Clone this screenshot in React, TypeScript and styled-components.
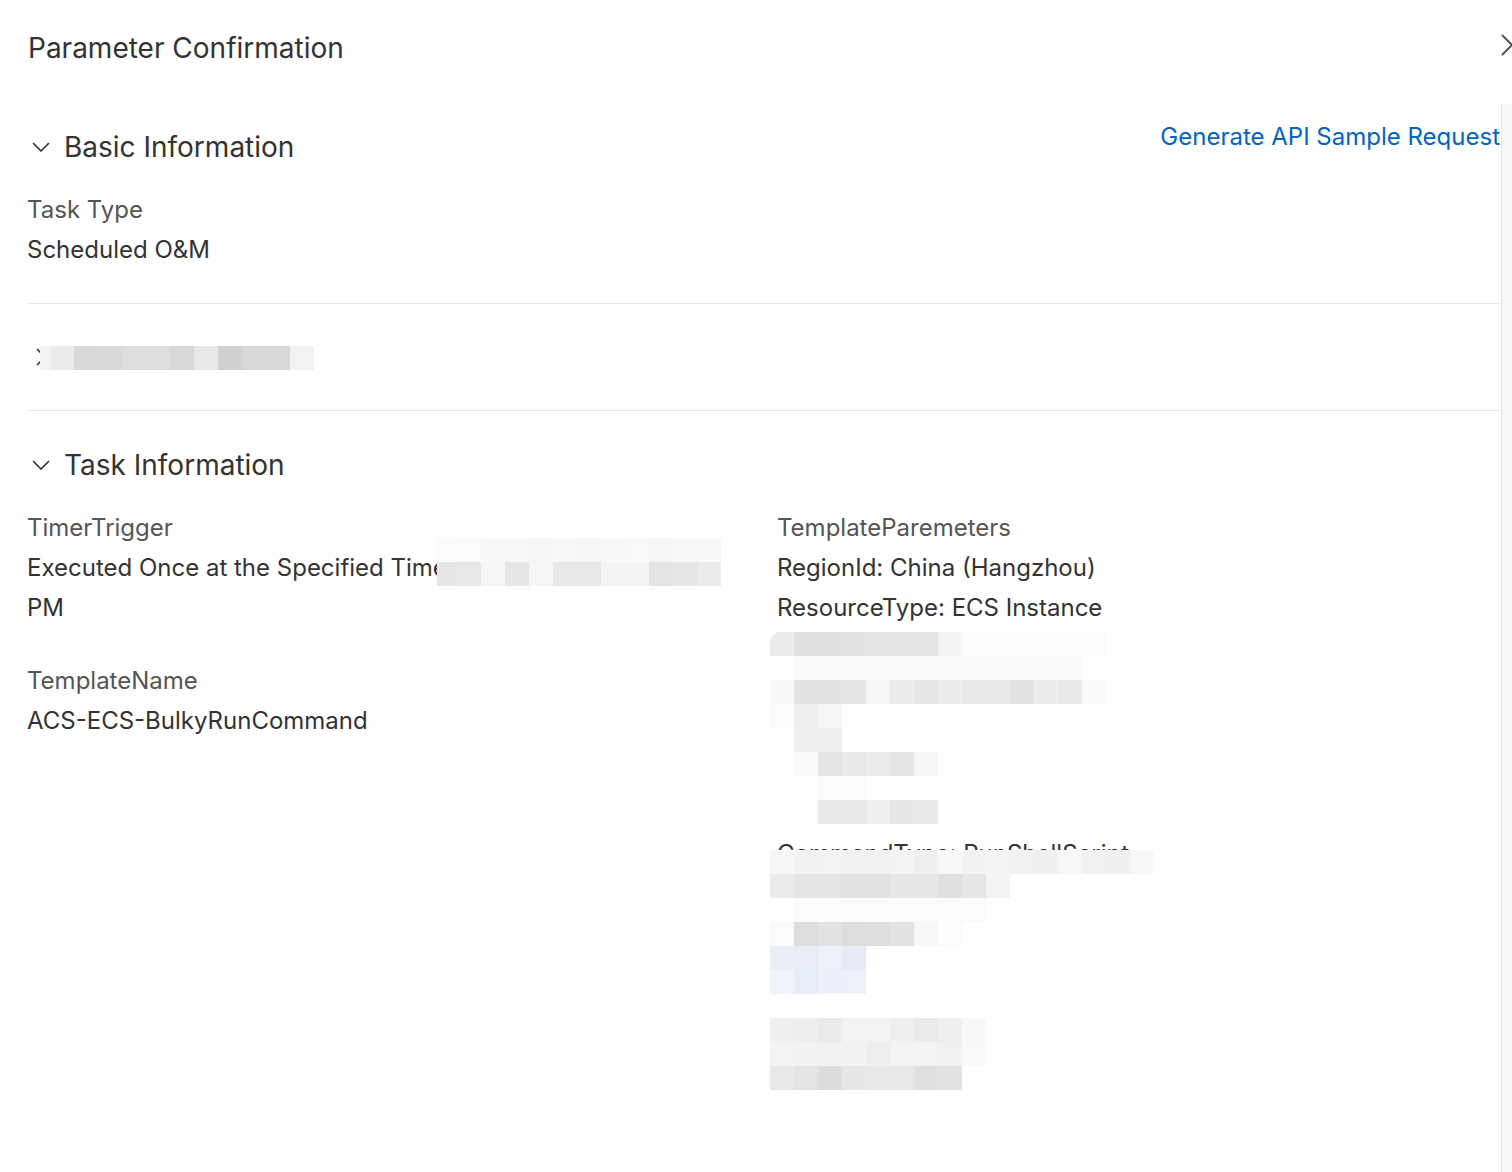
import React from 'react';
import styled, { createGlobalStyle } from 'styled-components';

const GlobalStyle = createGlobalStyle`
  html, body {
    margin: 0;
    padding: 0;
    background: #fff;
    overflow: hidden;
  }
  body {
    font-family: Inter, 'Noto Sans', 'Liberation Sans', sans-serif;
    color: #333;
  }
`;

const Drawer = styled.div`
  width: 1512px;
  height: 1172px;
  display: flex;
  flex-direction: column;
  overflow: hidden;
  background: #fff;
`;

const DrawerHeader = styled.div`
  height: 104px;
  box-sizing: border-box;
  display: flex;
  align-items: flex-start;
  justify-content: space-between;
  padding: 28px 0 0 28px;
  flex-shrink: 0;
`;

const Title = styled.div`
  font-size: 28px;
  line-height: 40px;
  font-weight: 400;
  color: #333;
`;

const CloseButton = styled.button`
  width: 22px;
  height: 22px;
  margin-top: 6px;
  margin-right: -11px;
  padding: 0;
  border: none;
  background: transparent;
  display: flex;
  cursor: pointer;
`;

const DrawerBody = styled.div`
  flex: 1;
  display: flex;
  min-height: 0;
`;

const Content = styled.div`
  flex: 1;
  padding-left: 27px;
`;

const ScrollTrack = styled.div`
  width: 10px;
  background: #f8f8f8;
  border-left: 1px solid #e6e6e6;
`;

const Section = styled.div<{ $pt: number; $pb: number; $last?: boolean }>`
  padding: ${({ $pt }) => $pt}px 0 ${({ $pb }) => $pb}px;
  border-bottom: ${({ $last }) => ($last ? 'none' : '1px solid #e8e8e8')};
`;

const SectionHead = styled.div`
  display: flex;
  align-items: flex-start;
`;

const ChevronBox = styled.span`
  width: 28px;
  height: 40px;
  margin-right: 9px;
  display: flex;
  align-items: center;
  justify-content: center;
  flex-shrink: 0;
`;

const SectionTitle = styled.div`
  font-size: 28px;
  line-height: 40px;
  color: #333;
`;

const ApiLink = styled.a`
  margin-left: auto;
  margin-top: -10px;
  margin-right: 1px;
  font-size: 24px;
  line-height: 40px;
  color: #0064c8;
  text-decoration: none;
  cursor: pointer;
`;

const FieldList = styled.div`
  margin-top: 23px;
  display: flex;
  flex-direction: column;
  gap: 33px;
`;

const Field = styled.div`
  display: flex;
  flex-direction: column;
`;

const FieldLabel = styled.div`
  font-size: 24px;
  line-height: 40px;
  color: #555;
`;

const FieldValue = styled.div`
  position: relative;
  font-size: 24px;
  line-height: 40px;
  color: #333;
  white-space: nowrap;
`;

const TaskGrid = styled.div`
  margin-top: 23px;
  display: grid;
  grid-template-columns: 750px 1fr;
`;

const Column = styled.div`
  display: flex;
  flex-direction: column;
  gap: 33px;
`;

const Mosaic = styled.div<{ $radius?: number }>`
  display: flex;
  flex-direction: column;
  border-top-left-radius: ${({ $radius }) => $radius ?? 0}px;
  overflow: hidden;
`;

const MosaicOverlay = styled(Mosaic)`
  position: absolute;
  left: 410px;
  top: -10px;
`;

const InlineMosaic = styled(Mosaic)`
  margin-left: -24px;
  margin-top: 9px;
`;

const ParamMosaic = styled(Mosaic)`
  margin-top: 4px;
  margin-left: -7px;
`;

const MosaicRow = styled.div<{ $offset: number; $h: number }>`
  display: flex;
  height: ${({ $h }) => $h}px;
  padding-left: ${({ $offset }) => $offset * 24}px;
`;

const Cell = styled.span<{ $c: string; $w?: number }>`
  width: ${({ $w }) => $w ?? 24}px;
  height: 100%;
  flex-shrink: 0;
  background: #${({ $c }) => $c};
`;

const PeekRow = styled.div`
  height: 26px;
  overflow: hidden;
  padding-left: 7px;
`;

const PeekText = styled.div`
  margin-top: 10px;
  font-size: 24px;
  line-height: 40px;
  color: #333;
  white-space: nowrap;
`;

type Row = { offset?: number; h?: number; cells: (string | [string, number])[] };

const renderRows = (rows: Row[]) =>
  rows.map((row, i) => (
    <MosaicRow key={i} $offset={row.offset ?? 0} $h={row.h ?? 24}>
      {row.cells.map((c, j) =>
        Array.isArray(c) ? <Cell key={j} $c={c[0]} $w={c[1]} /> : <Cell key={j} $c={c} />
      )}
    </MosaicRow>
  ));

const fill = (c: string, n: number) => Array.from({ length: n }, () => c);

const targetRows: Row[] = [
  {
    cells: [
      ['f4f4f4', 10],
      'ececec', 'd9d9d9', 'dadada', 'dddddd', 'dddddd', 'd8d8d8',
      'e8e8e8', 'd0d0d0', 'd8d8d8', 'd8d8d8', 'f3f3f3',
    ],
  },
];

const timeRows: Row[] = [
  {
    cells: [
      ['fcfcfc', 20],
      'fbfbfb', 'f8f8f8', 'f8f8f8', 'f6f6f6', 'f8f8f8', 'f6f6f6',
      'f8f8f8', 'f9f9f9', 'f6f6f6', 'f8f8f8', 'f8f8f8',
    ],
  },
  {
    cells: [
      ['e6e6e6', 20],
      'e8e8e8', 'f6f6f6', 'e6e6e6', 'f6f6f6', 'e8e8e8', 'e8e8e8',
      'f4f4f4', 'f4f4f4', 'e4e4e4', 'e6e6e6', 'ececec',
    ],
  },
];

const paramRowsTop: Row[] = [
  {
    cells: [
      'ececec', 'e0e0e0', 'e0e0e0', 'e2e2e2', 'e4e4e4', 'e4e4e4', 'e4e4e4', 'f4f4f4',
      ...fill('fcfcfc', 6),
    ],
  },
  { offset: 1, cells: fill('fafafa', 12) },
  {
    cells: [
      'f8f8f8', 'e2e2e2', 'e2e2e2', 'e4e4e4', 'f6f6f6', 'ececec', 'e6e6e6',
      'ececec', 'e8e8e8', 'e8e8e8', 'e2e2e2', 'ececec', 'e8e8e8', 'fafafa',
    ],
  },
  { cells: ['fbfbfb', 'f0f0f0', 'f6f6f6'] },
  { offset: 1, cells: ['f0f0f0', 'f0f0f0'] },
  { offset: 1, cells: ['fafafa', 'e4e4e4', 'e8e8e8', 'ececec', 'e4e4e4', 'f6f6f6'] },
  { offset: 2, cells: ['fbfbfb', 'fbfbfb'] },
  { offset: 2, cells: ['e8e8e8', 'e8e8e8', 'efefef', 'e6e6e6', 'e8e8e8'] },
];

const paramRowsBottom: Row[] = [
  {
    cells: [
      'f6f6f6', 'f2f2f2', 'f3f3f3', 'f1f1f1', 'f1f1f1', 'f3f3f3', 'f0f0f0', 'f8f8f8',
      'f2f2f2', 'f4f4f4', 'f2f2f2', 'f0f0f0', 'f8f8f8', 'f1f1f1', 'f0f0f0', 'f8f8f8',
    ],
  },
  {
    cells: [
      'ececec', 'e4e4e4', 'e4e4e4', 'e2e2e2', 'e2e2e2',
      'e6e6e6', 'e6e6e6', 'e0e0e0', 'e6e6e6', 'f4f4f4',
    ],
  },
  { offset: 1, cells: fill('fbfbfb', 8) },
  { cells: ['fbfbfb', 'dddddd', 'e2e2e2', 'dddddd', 'dedede', 'e2e2e2', 'f8f8f8', 'fcfcfc'] },
  { cells: ['ebeef8', 'e8edf8', 'edf1fa', 'e6ebf7'] },
  { cells: ['f2f4fb', 'e8eef8', 'ecf0fa', 'ecf1fa'] },
  { cells: [] },
  {
    cells: [
      'f0f0f0', 'eeeeee', 'ebebeb', 'f3f3f3', 'f3f3f3',
      'f0f0f0', 'ebebeb', 'efefef', 'f8f8f8',
    ],
  },
  {
    cells: [
      'f3f3f3', 'f2f2f2', 'f2f2f2', 'f2f2f2', 'efefef',
      'f3f3f3', 'f3f3f3', 'f1f1f1', 'f9f9f9',
    ],
  },
  { cells: ['e8e8e8', 'e4e4e4', 'dcdcdc', 'e6e6e6', 'e8e8e8', 'e8e8e8', 'e0e0e0', 'e2e2e2'] },
];

const Chevron: React.FC<{ open?: boolean }> = ({ open }) =>
  open ? (
    <svg width='18' height='11' viewBox='0 0 18 11' fill='none'>
      <polyline points='1.5,1.5 9,9 16.5,1.5' stroke='#333' strokeWidth='1.7' strokeLinecap='round' strokeLinejoin='round' />
    </svg>
  ) : (
    <svg width='11' height='18' viewBox='0 0 11 18' fill='none'>
      <polyline points='1.5,1.5 9,9 1.5,16.5' stroke='#333' strokeWidth='1.7' strokeLinecap='round' strokeLinejoin='round' />
    </svg>
  );

const App: React.FC = () => {
  return (
    <>
      <GlobalStyle />
      <Drawer>
        <DrawerHeader>
          <Title>Parameter Confirmation</Title>
          <CloseButton aria-label='close'>
            <svg width='22' height='22' viewBox='0 0 22 22' fill='none'>
              <path d='M1.5 1.5 L20.5 20.5 M20.5 1.5 L1.5 20.5' stroke='#555' strokeWidth='2' strokeLinecap='round' />
            </svg>
          </CloseButton>
        </DrawerHeader>
        <DrawerBody>
          <Content>
            <Section $pt={23} $pb={33}>
              <SectionHead>
                <ChevronBox>
                  <Chevron open />
                </ChevronBox>
                <SectionTitle>Basic Information</SectionTitle>
                <ApiLink>Generate API Sample Request</ApiLink>
              </SectionHead>
              <FieldList>
                <Field>
                  <FieldLabel>Task Type</FieldLabel>
                  <FieldValue>Scheduled O&amp;M</FieldValue>
                </Field>
              </FieldList>
            </Section>

            <Section $pt={33} $pb={33}>
              <SectionHead>
                <ChevronBox>
                  <Chevron />
                </ChevronBox>
                <InlineMosaic>{renderRows(targetRows)}</InlineMosaic>
              </SectionHead>
            </Section>

            <Section $pt={34} $pb={0} $last>
              <SectionHead>
                <ChevronBox>
                  <Chevron open />
                </ChevronBox>
                <SectionTitle>Task Information</SectionTitle>
              </SectionHead>
              <TaskGrid>
                <Column>
                  <Field>
                    <FieldLabel>TimerTrigger</FieldLabel>
                    <FieldValue>
                      Executed Once at the Specified Time
                      <MosaicOverlay>{renderRows(timeRows)}</MosaicOverlay>
                    </FieldValue>
                    <FieldValue>PM</FieldValue>
                  </Field>
                  <Field>
                    <FieldLabel>TemplateName</FieldLabel>
                    <FieldValue>ACS-ECS-BulkyRunCommand</FieldValue>
                  </Field>
                </Column>
                <Column>
                  <Field>
                    <FieldLabel>TemplateParemeters</FieldLabel>
                    <FieldValue>RegionId: China (Hangzhou)</FieldValue>
                    <FieldValue>ResourceType: ECS Instance</FieldValue>
                    <ParamMosaic $radius={10}>
                      {renderRows(paramRowsTop)}
                      <PeekRow>
                        <PeekText>CommandType: RunShellScript</PeekText>
                      </PeekRow>
                      {renderRows(paramRowsBottom)}
                    </ParamMosaic>
                  </Field>
                </Column>
              </TaskGrid>
            </Section>
          </Content>
          <ScrollTrack />
        </DrawerBody>
      </Drawer>
    </>
  );
};

export default App;
